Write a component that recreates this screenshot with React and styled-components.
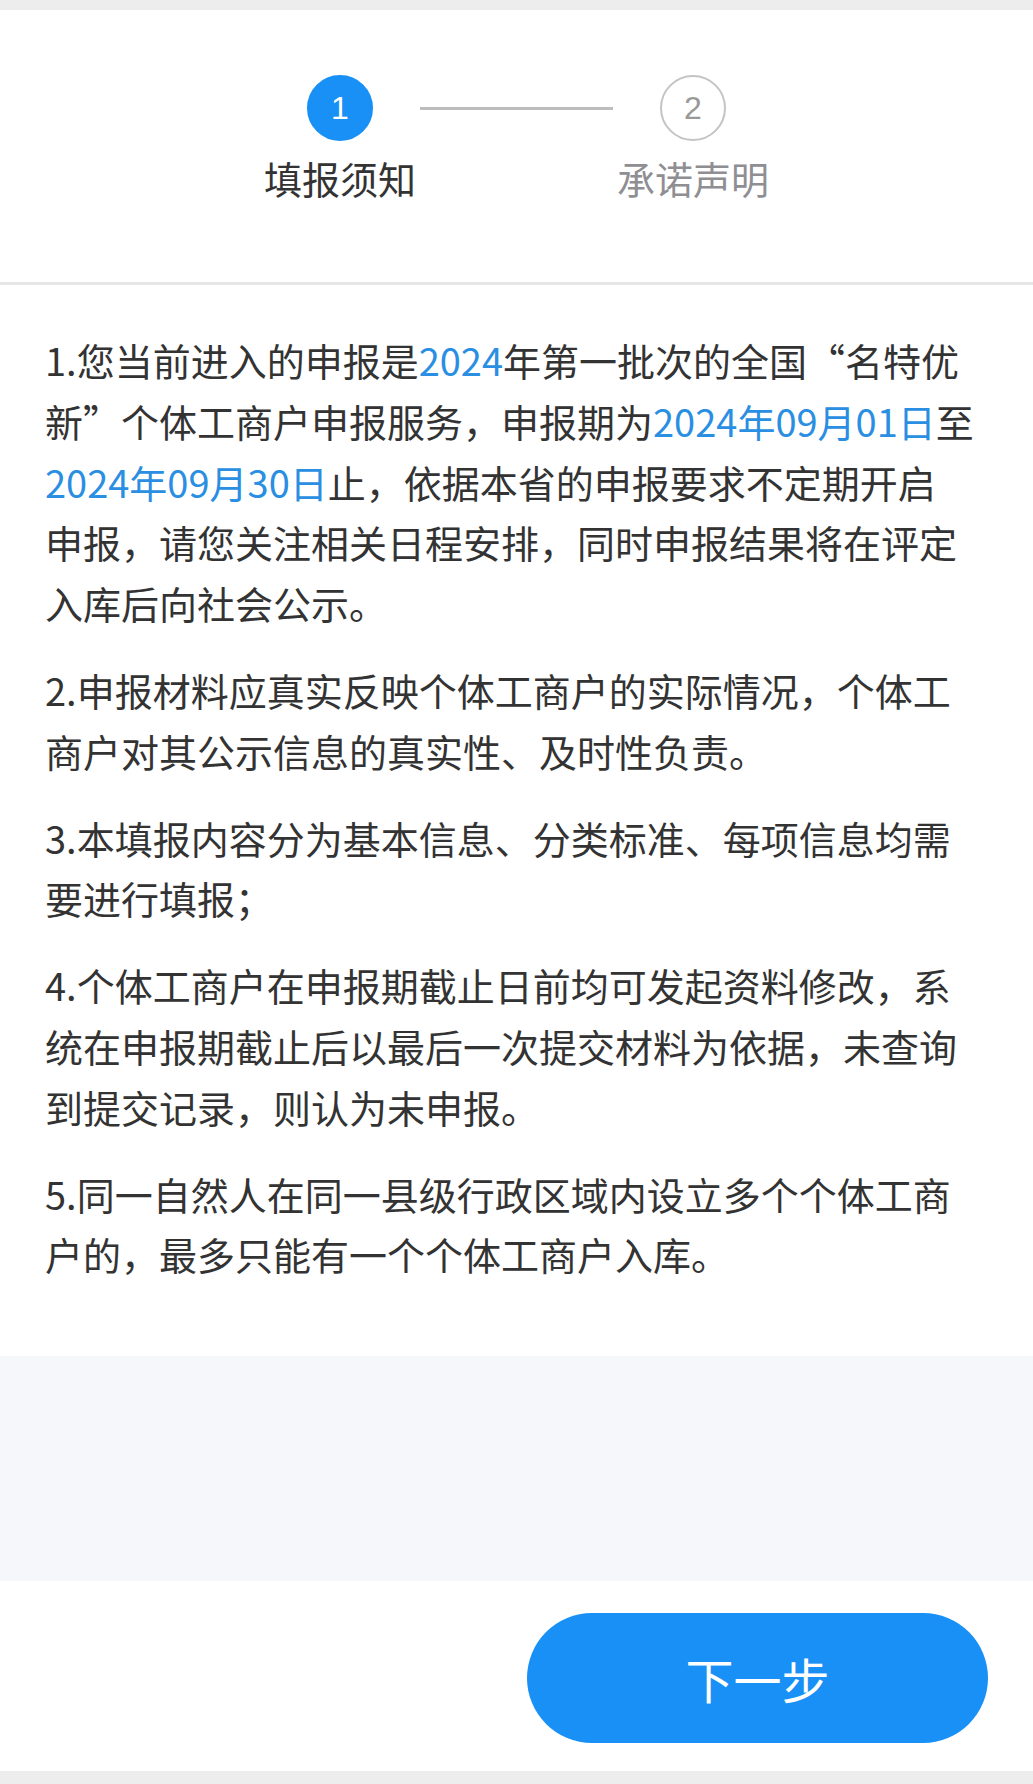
import styled, { createGlobalStyle } from 'styled-components';

const GlobalStyle = createGlobalStyle`
  html, body {
    margin: 0;
    padding: 0;
    background: #ffffff;
  }
  body {
    font-family: "Noto Sans CJK SC", "Noto Sans", sans-serif;
    color: #333333;
  }
`;

// 각 문단을 줄 단위로 나눠서 원본과 같은 위치에서 줄바꿈
const paragraphs = [
  [
    [{ t: '1.您当前进入的申报是' }, { t: '2024', hl: true }, { t: '年第一批次的全国“名特优' }],
    [{ t: '新”个体工商户申报服务，申报期为' }, { t: '2024年09月01日', hl: true }, { t: '至' }],
    [{ t: '2024年09月30日', hl: true }, { t: '止，依据本省的申报要求不定期开启' }],
    [{ t: '申报，请您关注相关日程安排，同时申报结果将在评定' }],
    [{ t: '入库后向社会公示。' }],
  ],
  [
    [{ t: '2.申报材料应真实反映个体工商户的实际情况，个体工' }],
    [{ t: '商户对其公示信息的真实性、及时性负责。' }],
  ],
  [
    [{ t: '3.本填报内容分为基本信息、分类标准、每项信息均需' }],
    [{ t: '要进行填报；' }],
  ],
  [
    [{ t: '4.个体工商户在申报期截止日前均可发起资料修改，系' }],
    [{ t: '统在申报期截止后以最后一次提交材料为依据，未查询' }],
    [{ t: '到提交记录，则认为未申报。' }],
  ],
  [
    [{ t: '5.同一自然人在同一县级行政区域内设立多个个体工商' }],
    [{ t: '户的，最多只能有一个个体工商户入库。' }],
  ],
];

function App() {
  return (
    <>
      <GlobalStyle />
      <Page>
        <TopBar />
        <Header>
          <Steps>
            <Step>
              <Circle $active>1</Circle>
              <StepLabel $active>填报须知</StepLabel>
            </Step>
            <Connector />
            <Step>
              <Circle>2</Circle>
              <StepLabel>承诺声明</StepLabel>
            </Step>
          </Steps>
        </Header>
        <Content>
          {paragraphs.map((lines, i) => (
            <Paragraph key={i}>
              {lines.map((segs, j) => (
                <Line key={j}>
                  {segs.map((s, k) =>
                    s.hl ? <Highlight key={k}>{s.t}</Highlight> : <span key={k}>{s.t}</span>
                  )}
                </Line>
              ))}
            </Paragraph>
          ))}
        </Content>
        <GraySpace />
        <Footer>
          <NextButton>下一步</NextButton>
        </Footer>
        <BottomBar />
      </Page>
    </>
  );
}
export default App;

const Page = styled.div`
  width: 1033px;
  min-height: 1784px;
  display: flex;
  flex-direction: column;
  background: #ffffff;
`;
const TopBar = styled.div`
  height: 10px;
  background: #ededed;
`;
const Header = styled.div`
  padding: 65px 0 82px;
  border-bottom: 3px solid #e6e6e6;
`;
const Steps = styled.div`
  display: grid;
  grid-template-columns: 160px 193px 160px;
  justify-content: center;
`;
const Step = styled.div`
  display: flex;
  flex-direction: column;
  align-items: center;
`;
const Circle = styled.div`
  width: 66px;
  height: 66px;
  box-sizing: border-box;
  border-radius: 50%;
  display: flex;
  align-items: center;
  justify-content: center;
  font-size: 32px;
  font-family: "Liberation Sans", "Noto Sans", sans-serif;
  color: ${(p) => (p.$active ? '#ffffff' : '#999999')};
  background: ${(p) => (p.$active ? '#1890f5' : '#ffffff')};
  border: 2px solid ${(p) => (p.$active ? '#1890f5' : '#c4c4c4')};
`;
const StepLabel = styled.div`
  margin-top: 15px;
  font-size: 38px;
  line-height: 44px;
  white-space: nowrap;
  color: ${(p) => (p.$active ? '#333333' : '#8e8e93')};
`;
const Connector = styled.div`
  height: 3px;
  margin-top: 32px;
  background: #bdbdbd;
`;
const Content = styled.div`
  padding: 45px 45px 71px;
`;
const Paragraph = styled.div`
  font-size: 38px;
  line-height: 60.8px;
  color: #333333;
  & + & {
    margin-top: 26px;
  }
`;
const Line = styled.div`
  white-space: nowrap;
`;
const Highlight = styled.span`
  color: #2a8fe2;
`;
const GraySpace = styled.div`
  height: 225px;
  background: #f5f7fa;
`;
const Footer = styled.div`
  height: 190px;
  display: flex;
  justify-content: flex-end;
  align-items: flex-start;
  padding: 32px 45px 0;
  box-sizing: border-box;
`;
const NextButton = styled.button`
  width: 461px;
  height: 130px;
  border: none;
  border-radius: 65px;
  background: #1890f5;
  color: #ffffff;
  font-family: "Noto Sans CJK SC", sans-serif;
  font-size: 48px;
  cursor: pointer;
`;
const BottomBar = styled.div`
  height: 13px;
  background: #ededed;
`;
